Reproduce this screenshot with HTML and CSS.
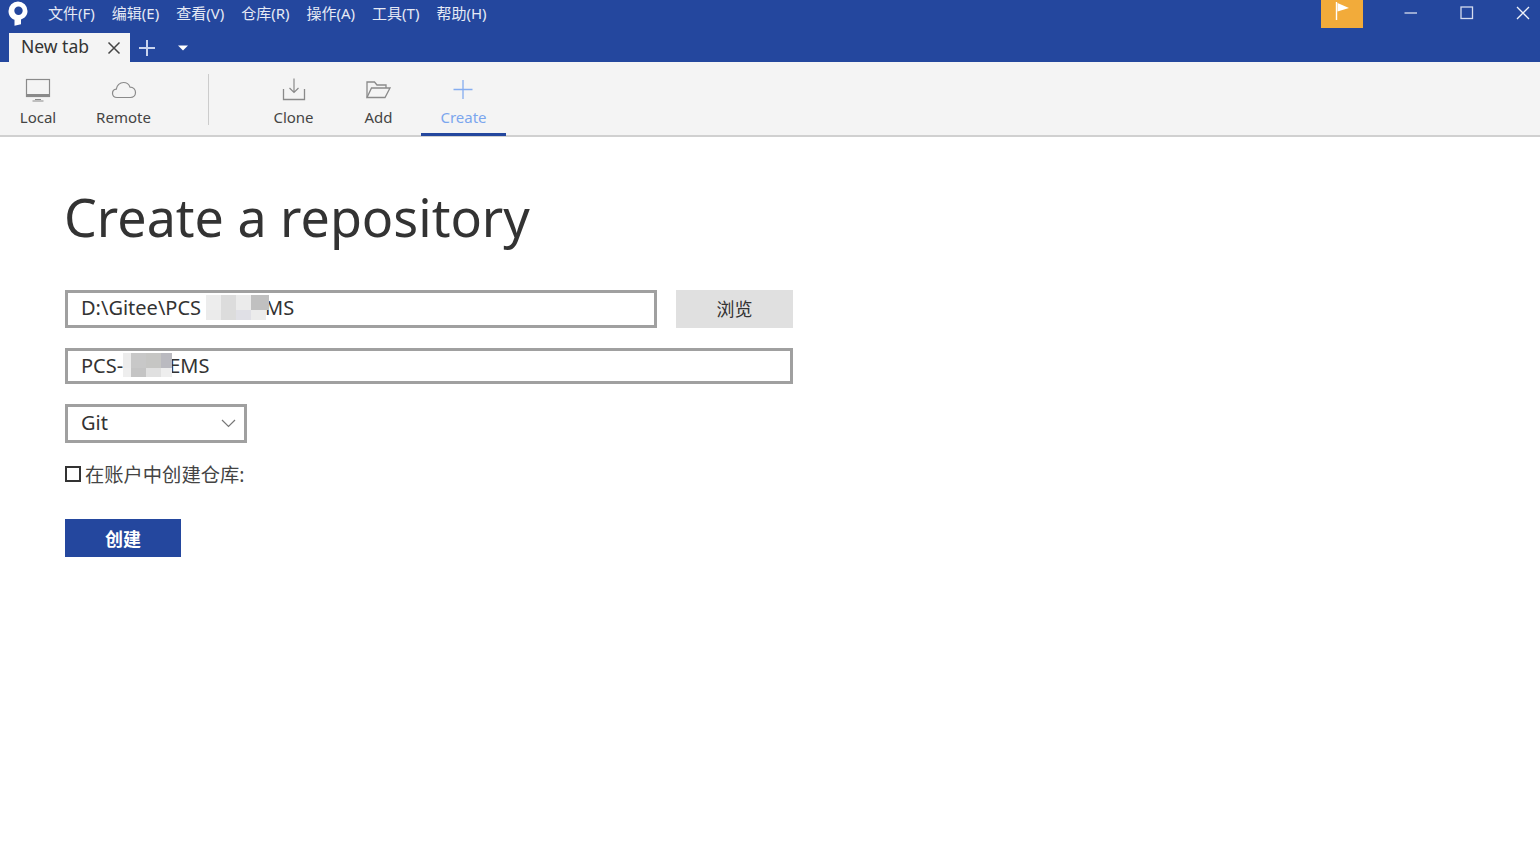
FILE: index.html
```html
<!DOCTYPE html>
<html lang="en">
<head>
<meta charset="utf-8">
<title>Create a repository</title>
<link rel="stylesheet" href="styles.css">
</head>
<body>
<header class="titlebar">
  <div class="menurow">
    <svg class="logo" width="22" height="27" viewBox="0 0 22 27"><path fill="#fff" fill-rule="evenodd" d="M11 1.500A9.500 9.500 0 0 1 20.500 11C20.500 14.800 18.300 18 14 19.500V24.300L7.500 25.800V19.800C3.800 18.600 1.500 15.200 1.500 11A9.500 9.500 0 0 1 11 1.500ZM11.500 6.500A4.200 4.200 0 1 0 11.500 14.900A4.200 4.200 0 1 0 11.500 6.500Z"/></svg>
    <nav class="menu">
      <span>文件(F)</span><span>编辑(E)</span><span>查看(V)</span><span>仓库(R)</span><span>操作(A)</span><span>工具(T)</span><span>帮助(H)</span>
    </nav>
    <div class="flagbtn"><svg width="16" height="20" viewBox="0 0 16 20"><path d="M1.500 1V19" stroke="#fff" stroke-width="1.400"/><path d="M2.500 2L14 7L2.500 10.500Z" fill="#fff"/></svg></div>
    <div class="winctl">
      <svg width="14" height="14" viewBox="0 0 14 14"><path d="M0.500 7H13" stroke="#e8ecf6" stroke-width="1.200"/></svg>
      <svg width="14" height="14" viewBox="0 0 14 14"><rect x="1" y="1" width="11.500" height="11.500" fill="none" stroke="#d5dcef" stroke-width="1.300"/></svg>
      <svg width="14" height="14" viewBox="0 0 14 14"><path d="M1 1L13 13M13 1L1 13" stroke="#f0f3fa" stroke-width="1.300"/></svg>
    </div>
  </div>
  <div class="tabrow">
    <div class="tab">
      <span class="tabtitle">New tab</span>
      <svg width="14" height="14" viewBox="0 0 14 14"><path d="M1.500 1.500L12.500 12.500M12.500 1.500L1.500 12.500" stroke="#444" stroke-width="1.500"/></svg>
    </div>
    <svg class="tabadd" width="18" height="18" viewBox="0 0 18 18"><path d="M9 1V17M1 9H17" stroke="#c9d4ee" stroke-width="2"/></svg>
    <svg class="tabcaret" width="10" height="6" viewBox="0 0 10 6"><path d="M0 0.500H10L5 5.500Z" fill="#fff"/></svg>
  </div>
</header>

<div class="toolbar">
  <div class="tool tool-local">
    <svg width="28" height="26" viewBox="0 0 28 26"><rect x="2.500" y="2.500" width="23" height="17" fill="none" stroke="#8a8a8a" stroke-width="1.200"/><rect x="2" y="17" width="24" height="3" fill="#8a8a8a"/><path d="M11 22.500H17M8.500 24H19.500" stroke="#8a8a8a"/></svg>
    <span>Local</span>
  </div>
  <div class="tool tool-remote">
    <svg width="28" height="26" viewBox="0 0 28 26"><path d="M7 20.500C4 20.500 2.500 18.500 2.500 16.300C2.500 14 4.300 12.300 6.300 12.100C6.800 8.400 9.800 5.500 13.500 5.500C16.500 5.500 19 7.300 20 10.100C23.300 10 25.500 12.600 25.500 15.500C25.500 18.300 23.300 20.500 20.500 20.500Z" fill="none" stroke="#8a8a8a" stroke-width="1.200"/></svg>
    <span>Remote</span>
  </div>
  <div class="divider"></div>
  <div class="tool tool-clone">
    <svg width="28" height="26" viewBox="0 0 28 26"><path d="M14 1.500V15.500M9.500 11L14 15.500L18.500 11" fill="none" stroke="#8a8a8a" stroke-width="1.200"/><path d="M3.500 12V22.500H24.500V12" fill="none" stroke="#8a8a8a" stroke-width="1.300"/></svg>
    <span>Clone</span>
  </div>
  <div class="tool">
    <svg width="28" height="26" viewBox="0 0 28 26"><path d="M2 20.500V5H9.500L12 8H21V11" fill="none" stroke="#8a8a8a" stroke-width="1.300"/><path d="M2 20.500L6.500 11H25L20 20.500Z" fill="none" stroke="#8a8a8a" stroke-width="1.300"/></svg>
    <span>Add</span>
  </div>
  <div class="tool tool-active">
    <svg width="28" height="26" viewBox="0 0 28 26"><path d="M13 3V22M3.500 12.500H22.500" stroke="#85adf0" stroke-width="1.300"/></svg>
    <span>Create</span>
  </div>
</div>

<main class="content">
  <h1>Create a repository</h1>
  <div class="row row-path">
    <div class="field field-path">D:\Gitee\PCS<svg class="mosaic mosaic-a" width="63" height="25" viewBox="0 0 63 25"><rect x="0" width="15" height="15" fill="#ededed"/><rect x="15" width="15" height="15" fill="#dcdcdc"/><rect x="30" width="15" height="15" fill="#ebebeb"/><rect x="45" width="18" height="15" fill="#c0c0c0"/><rect x="0" y="15" width="15" height="10" fill="#ebebeb"/><rect x="15" y="15" width="15" height="10" fill="#dcdcdc"/><rect x="30" y="15" width="15" height="10" fill="#e0e0e6"/><rect x="45" y="15" width="15" height="10" fill="#ececec"/></svg>MS</div>
    <button class="browse">浏览</button>
  </div>
  <div class="field field-name">PCS-<svg class="mosaic mosaic-b" width="49" height="24" viewBox="0 0 49 24"><rect x="0" width="8" height="15" fill="#ececec"/><rect x="8" width="15" height="15" fill="#c8c8c8"/><rect x="23" width="15" height="15" fill="#c6c6c4"/><rect x="38" width="11" height="15" fill="#babac0"/><rect x="0" y="15" width="8" height="9" fill="#eee"/><rect x="8" y="15" width="15" height="9" fill="#c4c4c4"/><rect x="23" y="15" width="15" height="9" fill="#e0e0e0"/><rect x="38" y="15" width="11" height="9" fill="#eee"/></svg>EMS</div>
  <div class="field field-select">
    <span>Git</span>
    <svg width="15" height="9" viewBox="0 0 15 9"><path d="M1 1L7.500 7.500L14 1" fill="none" stroke="#777" stroke-width="1.200"/></svg>
  </div>
  <label class="check"><span class="box"></span><span>在账户中创建仓库:</span></label>
  <button class="primary">创建</button>
</main>
</body>
</html>
```

FILE: styles.css
```css
* { box-sizing: border-box; }
html, body { margin: 0; height: 100%; }
body {
  background: #fff;
  color: #333;
  font-family: "Noto Sans", "Noto Sans CJK SC", sans-serif;
  overflow: hidden;
}
.titlebar {
  height: 62px;
  background: #24479e;
  display: flex;
  flex-direction: column;
}
.menurow {
  height: 33px;
  display: flex;
  align-items: flex-start;
}
.logo { margin: 0 0 0 7px; flex: none; }
.menu {
  display: flex;
  gap: 17px;
  margin-left: 19px;
  height: 25px;
  align-items: center;
  color: #e6eaf5;
  font-size: 15px;
  line-height: 20px;
}
.flagbtn {
  margin-left: auto;
  width: 42px;
  height: 28px;
  background: #f2ab3a;
  display: flex;
  align-items: flex-start;
  justify-content: center;
  padding-top: 1px;
}
.flagbtn svg { margin-left: 1px; }
.winctl {
  display: flex;
  gap: 42px;
  margin: 6px 10px 0 41px;
}
.tabrow {
  height: 29px;
  display: flex;
  align-items: center;
  padding-left: 9px;
}
.tab {
  width: 121px;
  height: 29px;
  background: #f4f4f4;
  display: flex;
  align-items: center;
  justify-content: space-between;
  padding: 0 9px 0 12px;
  color: #333;
}
.tabtitle { font-size: 17.5px; line-height: 27px; margin-top: -2px; }
.tabadd { margin-left: 8px; }
.tabcaret { margin-left: 22px; }
.toolbar {
  height: 75px;
  background: #f4f4f4;
  border-bottom: 2px solid #d0d0d0;
  display: flex;
  align-items: stretch;
}
.tool {
  width: 85px;
  display: flex;
  flex-direction: column;
  align-items: center;
  padding-top: 15px;
  font-size: 15px;
  line-height: 20px;
  color: #444;
  gap: 4px;
}
.tool-local { width: 76px; }
.tool-remote { width: 95px; }
.tool-clone { margin-left: 42px; }
.tool-active {
  color: #7ba6ee;
  border-bottom: 3px solid #24479e;
  margin-bottom: -1px;
}
.divider {
  width: 1px;
  height: 51px;
  margin: 12px 0 0 37px;
  background: #ccc;
}
.content {
  padding: 44px 0 0 64px;
  display: flex;
  flex-direction: column;
  align-items: flex-start;
}
h1 {
  margin: 0;
  font-weight: 400;
  font-size: 52px;
  line-height: 72px;
  color: #333;
}
.row-path {
  display: flex;
  gap: 19px;
  margin: 37px 0 0 1px;
}
.field {
  border: 3px solid #a0a0a0;
  background: #fff;
  font-size: 20px;
  color: #333;
  padding-left: 13px;
  display: flex;
  align-items: center;
  white-space: nowrap;
}
.field-path { width: 592px; height: 38px; padding-bottom: 3px; }
.mosaic { flex: none; z-index: 1; }
.mosaic-a { margin: 2px -4px 0 5px; align-self: flex-start; }
.mosaic-b { margin: 0 -3px 0 0; }
.browse {
  width: 117px;
  height: 38px;
  border: 0;
  background: #e0e0e0;
  color: #333;
  font: 18px "Noto Sans CJK SC", "Noto Sans", sans-serif;
  padding: 0 0 2px;
}
.field-name { width: 728px; height: 36px; margin: 20px 0 0 1px; padding-bottom: 2px; }
.field-select {
  width: 182px;
  height: 39px;
  margin: 20px 0 0 1px;
  justify-content: space-between;
  padding-right: 8px;
  padding-bottom: 2px;
}
.field-select svg { margin-top: 2px; }
.check {
  display: flex;
  align-items: center;
  gap: 4px;
  margin: 19px 0 0 1px;
  height: 24px;
  font-size: 19.3px;
  color: #444;
}
.box {
  width: 16px;
  height: 16px;
  border: 2px solid #333;
  background: #fff;
}
.primary {
  width: 116px;
  height: 38px;
  margin: 33px 0 0 1px;
  border: 0;
  padding: 0 0 1px;
  background: #24479e;
  color: #fff;
  font: 700 18px "Noto Sans CJK SC", "Noto Sans", sans-serif;
}
```
